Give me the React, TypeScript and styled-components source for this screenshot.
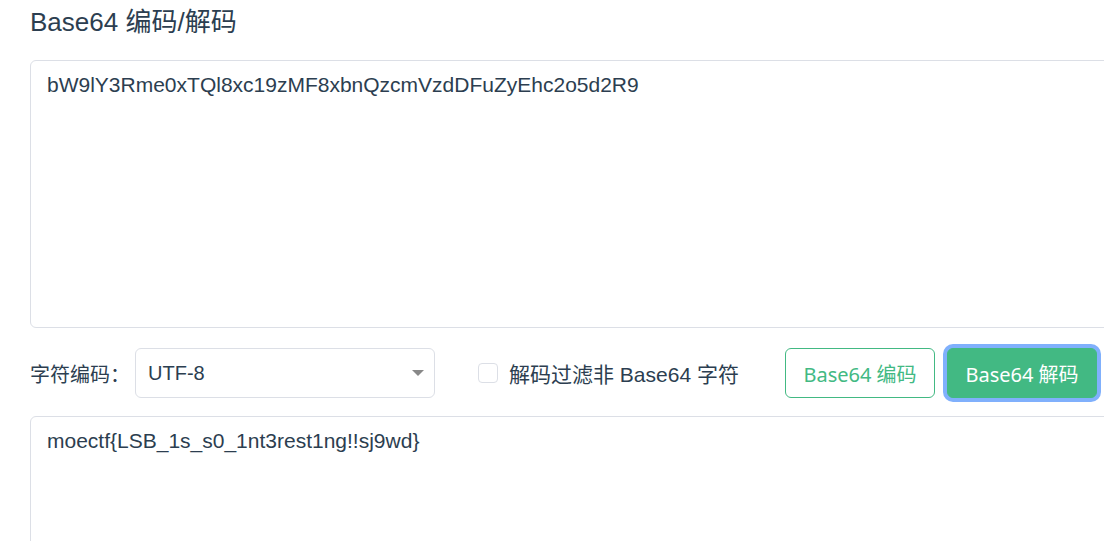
import React from "react";
import styled, { createGlobalStyle } from "styled-components";

const GlobalStyle = createGlobalStyle`
  html, body {
    margin: 0;
    padding: 0;
    background: #fff;
    overflow: hidden;
  }
  body {
    font-family: "Liberation Sans", "Noto Sans CJK SC", sans-serif;
    color: #2c3e50;
  }
`;

const COLORS = {
  text: "#2c3e50",
  border: "#dcdfe6",
  green: "#42b983",
  ring: "#80b0fc",
};

const Page = styled.div`
  padding: 0 0 0 30px;
  width: 1110px;
`;

const Title = styled.h1`
  margin: 0 0 16px;
  font-size: 26px;
  line-height: 44px;
  font-weight: 400;
  color: ${COLORS.text};
`;

const TextBox = styled.textarea<{ h: number }>`
  display: block;
  box-sizing: border-box;
  width: 1090px;
  height: ${(p) => p.h}px;
  margin: 0;
  padding: 10px 16px;
  border: 1px solid ${COLORS.border};
  border-radius: 6px;
  resize: none;
  outline: none;
  font-family: "Liberation Sans", "Noto Sans CJK SC", sans-serif;
  font-size: 21px;
  line-height: 28px;
  color: ${COLORS.text};
  background: #fff;
  overflow: hidden;
`;

const Row = styled.div`
  display: flex;
  align-items: center;
  width: 1067px;
  height: 50px;
  margin: 20px 0 18px;
`;

const Label = styled.span`
  font-size: 20px;
  margin-right: 5px;
  color: ${COLORS.text};
`;

const SelectWrap = styled.div`
  position: relative;
  box-sizing: border-box;
  width: 300px;
  height: 50px;
  border: 1px solid ${COLORS.border};
  border-radius: 6px;
  display: flex;
  align-items: center;
  padding: 0 12px;
  font-size: 20px;
  color: ${COLORS.text};

  &::after {
    content: "";
    position: absolute;
    right: 10px;
    top: 21px;
    border-left: 6px solid transparent;
    border-right: 6px solid transparent;
    border-top: 6px solid #888;
  }
`;

const CheckLabel = styled.label`
  display: flex;
  align-items: center;
  margin-left: 43px;
  font-size: 21px;
  color: ${COLORS.text};
`;

const CheckBox = styled.span`
  box-sizing: border-box;
  width: 20px;
  height: 20px;
  border: 1px solid ${COLORS.border};
  border-radius: 4px;
  margin-right: 11px;
`;

const Buttons = styled.div`
  display: flex;
  gap: 12px;
  margin-left: auto;
`;

const Button = styled.button<{ primary?: boolean }>`
  box-sizing: border-box;
  width: 150px;
  height: 50px;
  border: 1px solid ${COLORS.green};
  border-radius: 6px;
  background: ${(p) => (p.primary ? COLORS.green : "#fff")};
  color: ${(p) => (p.primary ? "#fff" : COLORS.green)};
  font-family: "Noto Sans", "Noto Sans CJK SC", sans-serif;
  font-size: 20px;
  padding: 0;
  box-shadow: ${(p) => (p.primary ? `0 0 0 4px ${COLORS.ring}` : "none")};
  cursor: pointer;
`;

export default function App() {
  return (
    <Page>
      <GlobalStyle />
      <Title>Base64 编码/解码</Title>
      <TextBox
        h={268}
        readOnly
        value="bW9lY3Rme0xTQl8xc19zMF8xbnQzcmVzdDFuZyEhc2o5d2R9"
      />
      <Row>
        <Label>字符编码：</Label>
        <SelectWrap>UTF-8</SelectWrap>
        <CheckLabel>
          <CheckBox />
          解码过滤非 Base64 字符
        </CheckLabel>
        <Buttons>
          <Button>Base64 编码</Button>
          <Button primary>Base64 解码</Button>
        </Buttons>
      </Row>
      <TextBox h={200} readOnly value="moectf{LSB_1s_s0_1nt3rest1ng!!sj9wd}" />
    </Page>
  );
}
